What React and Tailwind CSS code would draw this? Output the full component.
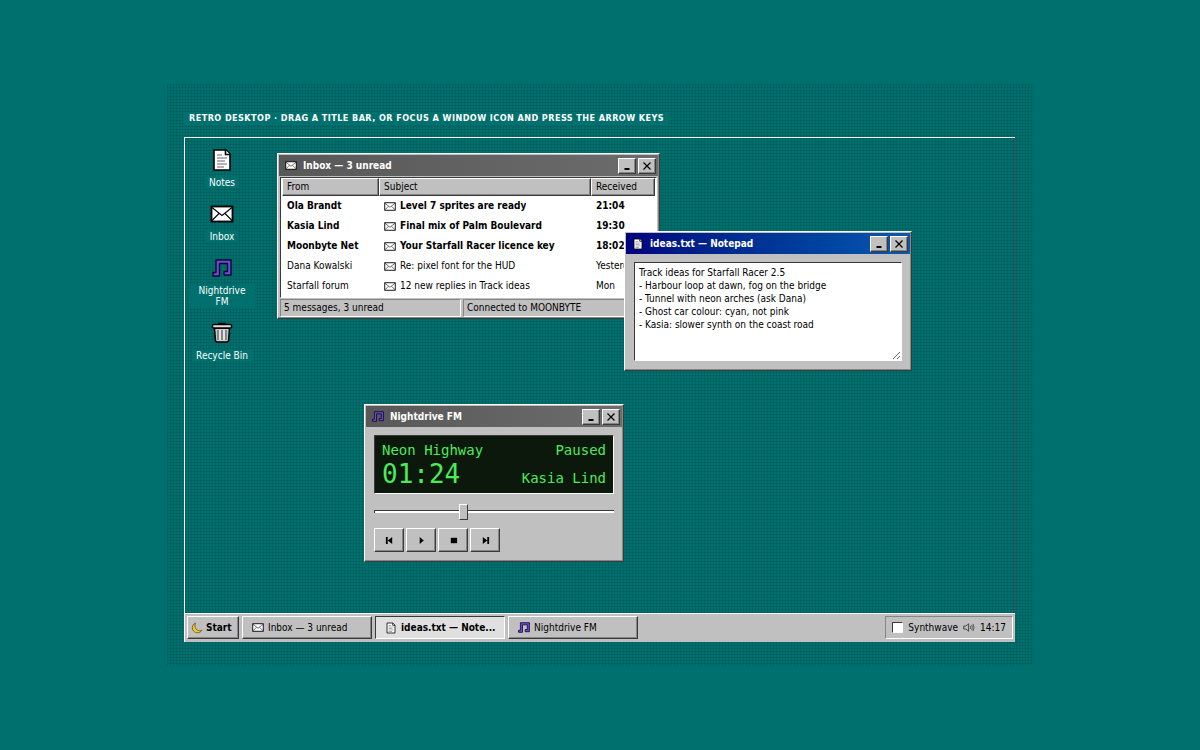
import React, { useState } from "react";

const RAISED =
  "border border-t-white border-l-white border-r-[#3a3a3a] border-b-[#3a3a3a] shadow-[inset_-1px_-1px_0_#858585]";
const SUNKEN =
  "border border-t-[#3a3a3a] border-l-[#3a3a3a] border-r-white border-b-white";

const MAILS = [
  { from: "Ola Brandt", subject: "Level 7 sprites are ready", received: "21:04", unread: true },
  { from: "Kasia Lind", subject: "Final mix of Palm Boulevard", received: "19:30", unread: true },
  { from: "Moonbyte Net", subject: "Your Starfall Racer licence key", received: "18:02", unread: true },
  { from: "Dana Kowalski", subject: "Re: pixel font for the HUD", received: "Yesterday", unread: false },
  { from: "Starfall forum", subject: "12 new replies in Track ideas", received: "Mon", unread: false },
];

const NOTES = `Track ideas for Starfall Racer 2.5
- Harbour loop at dawn, fog on the bridge
- Tunnel with neon arches (ask Dana)
- Ghost car colour: cyan, not pink
- Kasia: slower synth on the coast road`;

const NoteIcon = ({ className }) => (
  <svg viewBox="0 0 24 24" className={className} aria-hidden="true">
    <path d="M4 2H16L20 6V22H4Z" fill="#fff" stroke="#000" strokeWidth="1.6" />
    <path d="M15.500 2V6.500H20" fill="#fff" stroke="#000" strokeWidth="1.6" />
    <path d="M7 7H12M7 10H17M7 13H15M7 16H17M7 19H14" stroke="#6b6b6b" strokeWidth="1.1" />
  </svg>
);

const MailIcon = ({ className }) => (
  <svg viewBox="0 0 24 18" className={className} aria-hidden="true">
    <rect x="1.5" y="1.5" width="21" height="15" fill="#fff" stroke="#000" strokeWidth="1.8" />
    <path d="M2 2.500L12 10.500L22 2.500M2 15.500L9 8.500M22 15.500L15 8.500" fill="none" stroke="#000" strokeWidth="1.1" />
  </svg>
);

const MusicIcon = ({ className }) => (
  <svg viewBox="0 0 20 18" className={className} aria-hidden="true">
    <path
      d="M4 1H19V16H12V12.500H15.500V4.500H7.500V17H1V13.500H4Z"
      fill="#7446e0"
      stroke="#10082e"
      strokeWidth="1.400"
      strokeLinejoin="round"
    />
  </svg>
);

const BinIcon = ({ className }) => (
  <svg viewBox="0 0 24 24" className={className} aria-hidden="true">
    <path d="M9 4V2.500H15V4" fill="none" stroke="#000" strokeWidth="1.5" />
    <path d="M4.500 7H19.500L18.500 20L17 21H7L5.500 20Z" fill="#c9c9c9" stroke="#000" strokeWidth="1.5" />
    <path d="M8 9V19M12 9V19M16 9V19" stroke="#6a6a6a" strokeWidth="1.4" />
    <path d="M10 9V19M14 9V19" stroke="#f4f4f4" strokeWidth="1.2" />
    <rect x="2.500" y="3.500" width="19" height="3.500" rx="1" fill="#e2e2e2" stroke="#000" strokeWidth="1.5" />
  </svg>
);

const MoonIcon = ({ className }) => (
  <svg viewBox="0 0 16 16" className={className} aria-hidden="true">
    <path
      d="M6 1.500C2.500 3 1 6 2 9.500C3.200 13.500 8 15.500 12 13.500C13.300 12.800 14 12 14.500 11C10 12.500 6.500 10.500 5.500 7C5 5 5.300 3 6 1.500Z"
      fill="#f5c92f"
      stroke="#5a4708"
      strokeWidth="1"
      strokeLinejoin="round"
    />
  </svg>
);

const SpeakerIcon = ({ className }) => (
  <svg viewBox="0 0 16 12" className={className} fill="none" stroke="#222" aria-hidden="true">
    <path d="M1 4H4L7.500 1V11L4 8H1Z" />
    <path d="M9.500 4Q10.800 6 9.500 8M11.500 2.500Q13.500 6 11.500 9.500M13.300 1.200Q16.200 6 13.300 10.800" strokeWidth="0.9" />
  </svg>
);

const TitleButton = ({ label, onClick, children }) => (
  <button
    type="button"
    aria-label={label}
    onClick={onClick}
    className={`flex h-4 w-[18px] items-center justify-center bg-[#c0c0c0] ${RAISED}`}
  >
    <svg viewBox="0 0 10 10" className="size-[10px]" fill="none" stroke="#000" aria-hidden="true">
      {children}
    </svg>
  </button>
);

const Window = ({ title, icon, active, className, onClose, children }) => (
  <section aria-label={title} className={`absolute flex flex-col bg-[#c0c0c0] p-px ${RAISED} ${className}`}>
    <header
      className={`flex h-[21px] shrink-0 items-center gap-[2px] pr-[2px] pl-[6px] text-white ${
        active ? "bg-linear-to-r from-[#00007f] to-[#1058ae]" : "bg-linear-to-r from-[#585858] to-[#6c6c6c]"
      }`}
    >
      {icon}
      <h2 className="flex-1 truncate pl-1 font-bold">{title}</h2>
      <TitleButton label={`Minimize ${title}`} onClick={onClose}>
        <path d="M2.500 8H7.500" strokeWidth="2" />
      </TitleButton>
      <TitleButton label={`Close ${title}`} onClick={onClose}>
        <path d="M1.500 1.500L8.500 8.500M8.500 1.500L1.500 8.500" strokeWidth="1.200" />
      </TitleButton>
    </header>
    {children}
  </section>
);

const InboxWindow = ({ onClose }) => (
  <Window
    title="Inbox — 3 unread"
    icon={<MailIcon className="h-[9px] w-3" />}
    className="top-[15px] left-[92px] w-[383px]"
    onClose={onClose}
  >
    <div className={`mx-px mt-px bg-white px-px pb-px ${SUNKEN}`}>
      <table className="w-full table-fixed border-separate border-spacing-0 text-left">
        <colgroup>
          <col className="w-[97px]" />
          <col />
          <col className="w-[64px]" />
        </colgroup>
        <thead>
          <tr className="h-[18px]">
            {["From", "Subject", "Received"].map((head) => (
              <th key={head} scope="col" className={`bg-[#c0c0c0] px-1 font-normal ${RAISED}`}>
                {head}
              </th>
            ))}
          </tr>
        </thead>
        <tbody>
          {MAILS.map((mail) => (
            <tr key={mail.subject} className={mail.unread ? "h-5 font-bold" : "h-5"}>
              <td className="px-[5px]">{mail.from}</td>
              <td className="px-[5px]">
                <span className="flex items-center gap-1">
                  <MailIcon className="h-[9px] w-3 shrink-0" />
                  <span className="truncate">{mail.subject}</span>
                </span>
              </td>
              <td className="px-[5px]">{mail.received}</td>
            </tr>
          ))}
        </tbody>
      </table>
    </div>
    <footer className="mt-px flex gap-[2px] px-px">
      <p className="h-[18px] w-[181px] border border-t-[#858585] border-r-white border-b-white border-l-[#858585] px-[3px] leading-4">
        5 messages, 3 unread
      </p>
      <p className="h-[18px] flex-1 border border-t-[#858585] border-r-white border-b-white border-l-[#858585] px-[3px] leading-4">
        Connected to MOONBYTE
      </p>
    </footer>
  </Window>
);

const NotepadWindow = ({ onClose }) => {
  const [text, setText] = useState(NOTES);

  return (
    <Window
      title="ideas.txt — Notepad"
      icon={<NoteIcon className="size-3" />}
      active
      className="top-[93px] left-[439px] w-[288px]"
      onClose={onClose}
    >
      <div className="p-2">
        <textarea
          aria-label="Notes"
          value={text}
          onChange={({ target }) => setText(target.value)}
          spellCheck={false}
          className={`block h-[99px] w-full resize bg-white px-1 py-[3px] leading-[13px] outline-none ${SUNKEN}`}
        />
      </div>
    </Window>
  );
};

const PLAYER_BUTTONS = [
  { label: "Previous", path: "M1 1H3V9H1ZM8 1V9L3 5Z" },
  { label: "Play", path: "M3 1V9L7.500 5Z" },
  { label: "Stop", path: "M2 2H9V8H2Z" },
  { label: "Next", path: "M2 1V9L7 5ZM7 1H9V9H7Z" },
];

const PlayerWindow = ({ onClose }) => {
  const [seconds, setSeconds] = useState(84);
  const time = `${String(Math.floor(seconds / 60)).padStart(2, "0")}:${String(seconds % 60).padStart(2, "0")}`;

  return (
    <Window
      title="Nightdrive FM"
      icon={<MusicIcon className="h-[11px] w-3" />}
      className="top-[266px] left-[179px] w-[260px]"
      onClose={onClose}
    >
      <div className="p-2">
        <div
          className={`grid h-[59px] grid-cols-[auto_auto] content-start items-end justify-between bg-[#0b180b] px-[7px] pt-1 font-['DejaVu_Sans_Mono',monospace] text-sm text-[#4dea5c] ${SUNKEN}`}
        >
          <span>Neon Highway</span>
          <span className="text-right">Paused</span>
          <span className="text-[26px] leading-7">{time}</span>
          <span className="text-right">Kasia Lind</span>
        </div>
        <input
          type="range"
          aria-label="Position"
          min="0"
          max="231"
          value={seconds}
          onChange={({ target }) => setSeconds(Number(target.value))}
          className="mt-[9px] block h-4 w-full appearance-none bg-transparent [&::-webkit-slider-runnable-track]:h-[3px] [&::-webkit-slider-runnable-track]:border-t [&::-webkit-slider-runnable-track]:border-l [&::-webkit-slider-runnable-track]:border-[#3a3a3a] [&::-webkit-slider-runnable-track]:bg-white [&::-webkit-slider-thumb]:-mt-[7px] [&::-webkit-slider-thumb]:h-4 [&::-webkit-slider-thumb]:w-[9px] [&::-webkit-slider-thumb]:appearance-none [&::-webkit-slider-thumb]:border [&::-webkit-slider-thumb]:border-t-white [&::-webkit-slider-thumb]:border-r-[#3a3a3a] [&::-webkit-slider-thumb]:border-b-[#3a3a3a] [&::-webkit-slider-thumb]:border-l-white [&::-webkit-slider-thumb]:bg-[#c0c0c0]"
        />
        <div className="mt-[9px] flex gap-[2px]">
          {PLAYER_BUTTONS.map((button) => (
            <button
              key={button.label}
              type="button"
              aria-label={button.label}
              className={`flex h-6 w-[30px] items-center justify-center bg-[#c0c0c0] ${RAISED}`}
            >
              <svg viewBox="0 0 10 10" className="size-[9px]" aria-hidden="true">
                <path d={button.path} />
              </svg>
            </button>
          ))}
        </div>
      </div>
    </Window>
  );
};

const DESKTOP_ICONS = [
  { id: "notepad", label: "Notes", icon: <NoteIcon className="size-6" /> },
  { id: "inbox", label: "Inbox", icon: <MailIcon className="h-[18px] w-6" /> },
  { id: "player", label: "Nightdrive FM", icon: <MusicIcon className="h-[18px] w-5" /> },
  { id: "bin", label: "Recycle Bin", icon: <BinIcon className="size-6" /> },
];

const TASKS = [
  { id: "inbox", label: "Inbox — 3 unread", icon: <MailIcon className="h-[9px] w-3 shrink-0" /> },
  { id: "notepad", label: "ideas.txt — Notepad", icon: <NoteIcon className="size-3 shrink-0" /> },
  { id: "player", label: "Nightdrive FM", icon: <MusicIcon className="h-[11px] w-3 shrink-0" /> },
];

const shorten = (label) => (label.length > 16 ? `${label.slice(0, 16)}...` : label);

const App = () => {
  const [open, setOpen] = useState({ inbox: true, notepad: true, player: true });
  const [synthwave, setSynthwave] = useState(false);

  const toggle = (id) => setOpen({ ...open, [id]: !open[id] });

  return (
    <div className="flex min-h-screen items-center justify-center bg-[#00706e] font-['DejaVu_Sans_Condensed','Noto_Sans',sans-serif] text-[10px] leading-3 text-black">
      <main className="w-full max-w-[866px] bg-[#00706e] bg-[linear-gradient(to_right,rgba(0,50,50,0.18)_1px,transparent_1px),linear-gradient(to_bottom,rgba(0,50,50,0.18)_1px,transparent_1px)] bg-[size:3px_3px] pt-7 pr-[18px] pb-6 pl-[17px]">
        <h1 className="mb-3 w-fit bg-[#00706e] px-[5px] text-[9px] leading-[13px] font-bold tracking-wider text-white uppercase">
          Retro desktop · drag a title bar, or focus a window icon and press the arrow keys
        </h1>

        <div className="border-t border-l border-white">
          <div className="relative min-h-[475px] border-r border-r-[#4a4a5a]">
            {/* Desktop shortcuts */}
            <nav aria-label="Desktop" className="flex w-[74px] flex-col gap-[14px] px-1 pt-[10px]">
              {DESKTOP_ICONS.map((item) => (
                <button
                  key={item.label}
                  type="button"
                  onClick={() => setOpen({ ...open, [item.id]: true })}
                  className="flex flex-col items-center gap-[5px] leading-[11px] text-white"
                >
                  <span className="flex h-6 items-center">{item.icon}</span>
                  <span className="bg-[#00706e] px-1">{item.label}</span>
                </button>
              ))}
            </nav>

            {open.inbox && <InboxWindow onClose={() => toggle("inbox")} />}
            {open.player && <PlayerWindow onClose={() => toggle("player")} />}
            {open.notepad && <NotepadWindow onClose={() => toggle("notepad")} />}
          </div>

          {/* Taskbar */}
          <footer className="flex items-center gap-[3px] border-t border-white bg-[#c0c0c0] px-[2px] pt-[2px] pb-[3px]">
            <button
              type="button"
              className={`flex h-[23px] w-[52px] items-center gap-[3px] bg-[#c0c0c0] px-[3px] font-bold ${RAISED}`}
            >
              <MoonIcon className="size-3" />
              Start
            </button>
            {TASKS.map((task) => (
              <button
                key={task.id}
                type="button"
                title={task.label}
                onClick={() => toggle(task.id)}
                className={`flex h-[23px] w-[130px] items-center gap-1 px-[9px] whitespace-nowrap ${
                  task.id === "notepad" ? `bg-[#e0e0e0] font-bold ${SUNKEN}` : `bg-[#c0c0c0] ${RAISED}`
                }`}
              >
                {task.icon}
                {shorten(task.label)}
              </button>
            ))}
            <div className="ml-auto flex h-[23px] items-center gap-[5px] border border-t-[#858585] border-r-white border-b-white border-l-[#858585] px-[6px]">
              <label className="flex items-center gap-[5px]">
                <input
                  type="checkbox"
                  checked={synthwave}
                  onChange={({ target }) => setSynthwave(target.checked)}
                  className={`size-[11px] appearance-none bg-white checked:bg-[#7a4be8] ${SUNKEN}`}
                />
                Synthwave
              </label>
              <SpeakerIcon className="h-[9px] w-3" />
              <time>14:17</time>
            </div>
          </footer>
        </div>
      </main>
    </div>
  );
};

export default App;
